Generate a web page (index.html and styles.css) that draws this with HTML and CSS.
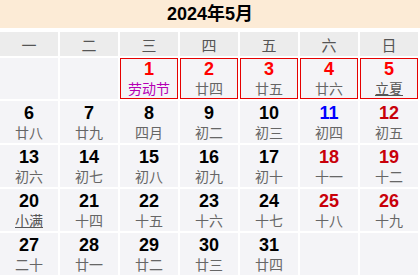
FILE: index.html
```html
<!DOCTYPE html>
<html lang="zh-CN">
<head>
<meta charset="utf-8">
<link rel="stylesheet" href="styles.css">
</head>
<body>
<div class="cal">
  <div class="title">2024年5月</div>
  <div class="grid">
    <div class="wd">一</div><div class="wd">二</div><div class="wd">三</div><div class="wd">四</div><div class="wd">五</div><div class="wd">六</div><div class="wd">日</div>

    <div class="cell"></div>
    <div class="cell"></div>
    <div class="cell hol"><span class="num">1</span><span class="lunar fest">劳动节</span></div>
    <div class="cell hol"><span class="num">2</span><span class="lunar">廿四</span></div>
    <div class="cell hol"><span class="num">3</span><span class="lunar">廿五</span></div>
    <div class="cell hol"><span class="num">4</span><span class="lunar">廿六</span></div>
    <div class="cell hol"><span class="num">5</span><span class="lunar term">立夏</span></div>

    <div class="cell"><span class="num">6</span><span class="lunar">廿八</span></div>
    <div class="cell"><span class="num">7</span><span class="lunar">廿九</span></div>
    <div class="cell"><span class="num">8</span><span class="lunar">四月</span></div>
    <div class="cell"><span class="num">9</span><span class="lunar">初二</span></div>
    <div class="cell"><span class="num">10</span><span class="lunar">初三</span></div>
    <div class="cell"><span class="num work">11</span><span class="lunar">初四</span></div>
    <div class="cell"><span class="num we">12</span><span class="lunar">初五</span></div>

    <div class="cell"><span class="num">13</span><span class="lunar">初六</span></div>
    <div class="cell"><span class="num">14</span><span class="lunar">初七</span></div>
    <div class="cell"><span class="num">15</span><span class="lunar">初八</span></div>
    <div class="cell"><span class="num">16</span><span class="lunar">初九</span></div>
    <div class="cell"><span class="num">17</span><span class="lunar">初十</span></div>
    <div class="cell"><span class="num we">18</span><span class="lunar">十一</span></div>
    <div class="cell"><span class="num we">19</span><span class="lunar">十二</span></div>

    <div class="cell"><span class="num">20</span><span class="lunar term">小满</span></div>
    <div class="cell"><span class="num">21</span><span class="lunar">十四</span></div>
    <div class="cell"><span class="num">22</span><span class="lunar">十五</span></div>
    <div class="cell"><span class="num">23</span><span class="lunar">十六</span></div>
    <div class="cell"><span class="num">24</span><span class="lunar">十七</span></div>
    <div class="cell"><span class="num we">25</span><span class="lunar">十八</span></div>
    <div class="cell"><span class="num we">26</span><span class="lunar">十九</span></div>

    <div class="cell"><span class="num">27</span><span class="lunar">二十</span></div>
    <div class="cell"><span class="num">28</span><span class="lunar">廿一</span></div>
    <div class="cell"><span class="num">29</span><span class="lunar">廿二</span></div>
    <div class="cell"><span class="num">30</span><span class="lunar">廿三</span></div>
    <div class="cell"><span class="num">31</span><span class="lunar">廿四</span></div>
    <div class="cell"></div>
    <div class="cell"></div>
  </div>
</div>
</body>
</html>
```
FILE: styles.css
```css
html, body {
  margin: 0;
  padding: 0;
  background: #ffffff;
}
body {
  font-family: "Liberation Sans", "Noto Sans CJK SC", sans-serif;
  width: 420px;
  height: 280px;
  overflow: hidden;
}
.title {
  height: 28px;
  line-height: 28px;
  background: #fcebd6;
  text-align: center;
  font-weight: bold;
  font-size: 18px;
  color: #000;
}
.grid {
  margin-top: 4px;
  display: grid;
  grid-template-columns: repeat(7, 58px);
  grid-template-rows: 24px 41px 42px 42px 42px 42px;
  gap: 2px;
}
.wd {
  background: #ececec;
  color: #555;
  font-size: 15px;
  display: flex;
  align-items: center;
  justify-content: center;
}
.cell {
  background: #f4f4f7;
  display: flex;
  flex-direction: column;
  align-items: center;
  justify-content: flex-start;
  padding-top: 2px;
  box-sizing: border-box;
}
.cell.hol {
  border: 1px solid #e60000;
  padding-top: 0;
}
.num {
  font-size: 18px;
  font-weight: bold;
  line-height: 20px;
  color: #000;
}
.hol .num { color: #ff0000; }
.num.we { color: #c8000a; }
.num.work { color: #0000ff; }
.lunar {
  font-size: 14px;
  line-height: 20px;
  color: #666;
}
.lunar.fest { color: #b400b4; }
.lunar.term {
  color: #555;
  text-decoration: underline;
}
```
